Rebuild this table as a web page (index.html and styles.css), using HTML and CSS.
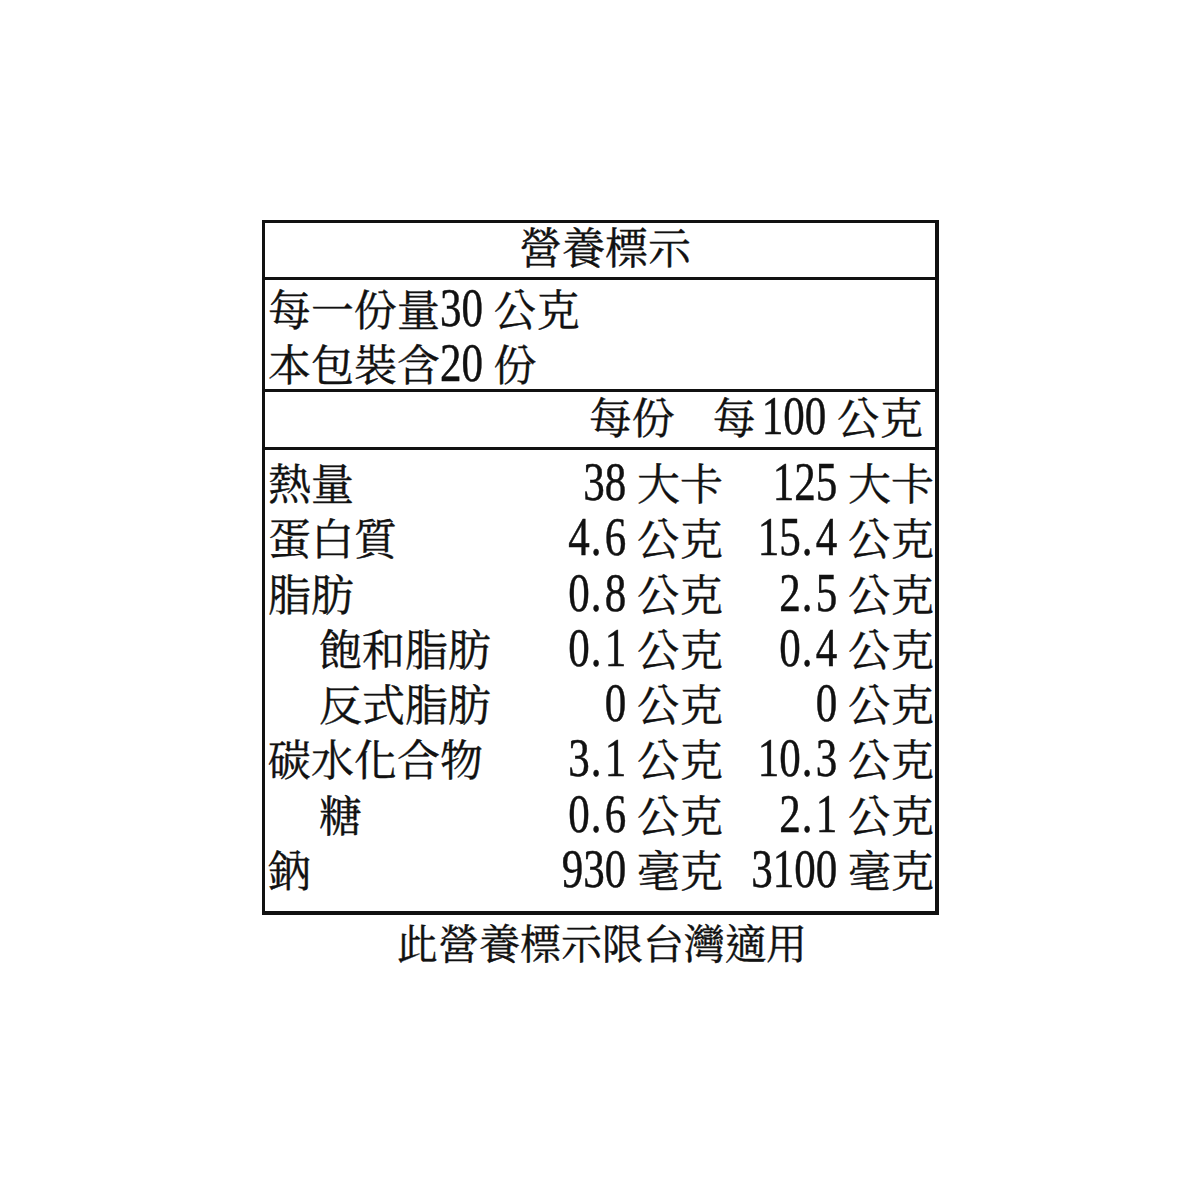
FILE: index.html
```html
<!DOCTYPE html>
<html lang="zh-Hant">
<head>
<meta charset="utf-8">
<title>營養標示</title>
<link rel="stylesheet" href="styles.css">
</head>
<body>
<div class="page">
  <div class="label">
    <div class="title">營養標示</div>
    <div class="serving">
      <div class="line">每一份量<span class="num">30</span> 公克</div>
      <div class="line">本包裝含<span class="num">20</span> 份</div>
    </div>
    <div class="head">
      <div></div>
      <div class="h1">每份</div>
      <div class="h2">每<span class="num gap">100</span> 公克</div>
    </div>
    <div class="rows">
      <div class="row"><div class="name">熱量</div><div class="v1"><span class="num">38</span> 大卡</div><div class="v2"><span class="num">125</span> 大卡</div></div>
      <div class="row"><div class="name">蛋白質</div><div class="v1"><span class="num">4<span class="pt">.</span>6</span> 公克</div><div class="v2"><span class="num">15<span class="pt">.</span>4</span> 公克</div></div>
      <div class="row"><div class="name">脂肪</div><div class="v1"><span class="num">0<span class="pt">.</span>8</span> 公克</div><div class="v2"><span class="num">2<span class="pt">.</span>5</span> 公克</div></div>
      <div class="row"><div class="name sub">飽和脂肪</div><div class="v1"><span class="num">0<span class="pt">.</span>1</span> 公克</div><div class="v2"><span class="num">0<span class="pt">.</span>4</span> 公克</div></div>
      <div class="row"><div class="name sub">反式脂肪</div><div class="v1"><span class="num">0</span> 公克</div><div class="v2"><span class="num">0</span> 公克</div></div>
      <div class="row"><div class="name">碳水化合物</div><div class="v1"><span class="num">3<span class="pt">.</span>1</span> 公克</div><div class="v2"><span class="num">10<span class="pt">.</span>3</span> 公克</div></div>
      <div class="row"><div class="name sub">糖</div><div class="v1"><span class="num">0<span class="pt">.</span>6</span> 公克</div><div class="v2"><span class="num">2<span class="pt">.</span>1</span> 公克</div></div>
      <div class="row"><div class="name">鈉</div><div class="v1"><span class="num">930</span> 毫克</div><div class="v2"><span class="num">3100</span> 毫克</div></div>
    </div>
  </div>
  <div class="note">此營養標示限台灣適用</div>
</div>
</body>
</html>
```

FILE: styles.css
```css
html, body {
  margin: 0;
  padding: 0;
  background: #ffffff;
}
body {
  font-family: "Liberation Serif", "Noto Serif CJK TC", "Noto Sans CJK TC", serif;
  color: #111111;
  font-size: 43px;
  -webkit-text-stroke: 0.4px #111111;
}
.page {
  padding-top: 220px;
  display: flex;
  flex-direction: column;
  align-items: center;
}
.label {
  width: 677px;
  box-sizing: border-box;
  border: 3px solid #111;
  border-bottom-width: 4px;
  border-right-width: 4px;
  margin-left: 1px;
}
.num {
  display: inline-block;
  transform: scaleY(1.28);
  transform-origin: 50% 78%;
}
.num.gap {
  margin-left: 6px;
}
.pt {
  display: inline-block;
  width: 15px;
  text-align: left;
  padding-left: 1px;
  box-sizing: border-box;
}
.title {
  height: 54px;
  line-height: 54px;
  text-align: center;
  border-bottom: 3px solid #111;
  padding-left: 10px;
}
.serving {
  height: 112px;
  box-sizing: border-box;
  padding: 4px 3px 0 3px;
  border-bottom: 3px solid #111;
}
.line {
  height: 55px;
  line-height: 55px;
  white-space: nowrap;
}
.head, .row {
  display: grid;
  grid-template-columns: 1fr 205px 208px;
  height: 55px;
  line-height: 55px;
  white-space: nowrap;
}
.row {
  height: 55.3px;
}
.head {
  border-bottom: 3px solid #111;
}
.h1 {
  text-align: right;
  padding-right: 52px;
}
.h2 {
  text-align: right;
  margin-left: -40px;
  padding-right: 12px;
}
.rows {
  padding: 8px 0 11px 0;
}
.name {
  padding-left: 3px;
}
.name.sub {
  padding-left: 54px;
}
.v1 {
  text-align: right;
  padding-right: 4px;
}
.v2 {
  text-align: right;
  padding-right: 1px;
}
.note {
  margin-top: 8px;
  font-size: 41px;
  line-height: 44px;
  padding-left: 4px;
}
```
